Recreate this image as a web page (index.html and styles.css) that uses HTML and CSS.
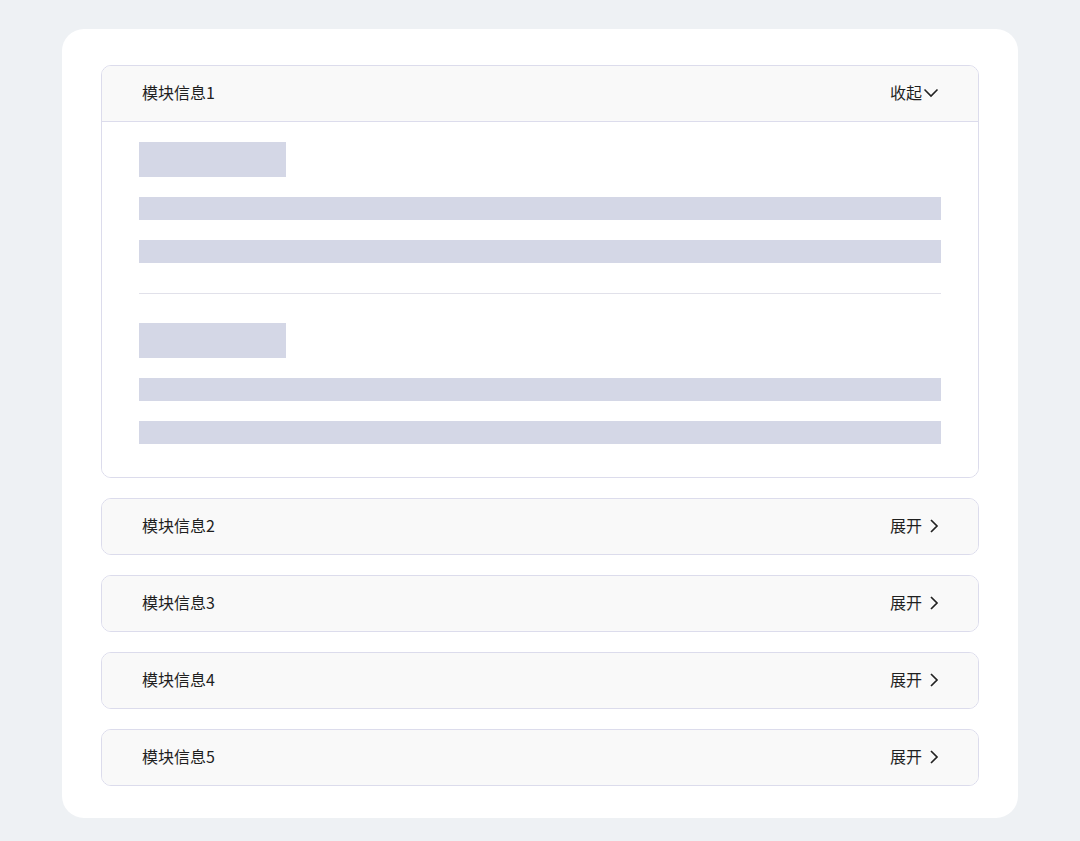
FILE: index.html
```html
<!DOCTYPE html>
<html lang="zh-CN">

<head>
    <meta charset="UTF-8">
    <meta name="viewport" content="width=device-width, initial-scale=1.0">
    <title>模块信息</title>
    <link rel="stylesheet" href="styles.css">
</head>

<body>
    <div class="card">
        <div class="panel open">
            <div class="panel-head">
                <span class="title">模块信息1</span>
                <span class="toggle">收起
                    <svg class="arrow down" width="16" height="10" viewBox="0 0 16 10">
                        <path d="M1.5 1.5l6.5 6.5 6.5-6.5" fill="none" stroke="#222" stroke-width="1.6" />
                    </svg>
                </span>
            </div>
            <div class="panel-body">
                <div class="group">
                    <div class="sk sk-title"></div>
                    <div class="sk sk-line"></div>
                    <div class="sk sk-line"></div>
                </div>
                <div class="divider"></div>
                <div class="group">
                    <div class="sk sk-title"></div>
                    <div class="sk sk-line"></div>
                    <div class="sk sk-line"></div>
                </div>
            </div>
        </div>

        <div class="panel">
            <div class="panel-head">
                <span class="title">模块信息2</span>
                <span class="toggle">展开
                    <svg class="arrow" width="10" height="16" viewBox="0 0 10 16">
                        <path d="M2 2l6 6-6 6" fill="none" stroke="#222" stroke-width="1.7" />
                    </svg>
                </span>
            </div>
        </div>

        <div class="panel">
            <div class="panel-head">
                <span class="title">模块信息3</span>
                <span class="toggle">展开
                    <svg class="arrow" width="10" height="16" viewBox="0 0 10 16">
                        <path d="M2 2l6 6-6 6" fill="none" stroke="#222" stroke-width="1.7" />
                    </svg>
                </span>
            </div>
        </div>

        <div class="panel">
            <div class="panel-head">
                <span class="title">模块信息4</span>
                <span class="toggle">展开
                    <svg class="arrow" width="10" height="16" viewBox="0 0 10 16">
                        <path d="M2 2l6 6-6 6" fill="none" stroke="#222" stroke-width="1.7" />
                    </svg>
                </span>
            </div>
        </div>

        <div class="panel">
            <div class="panel-head">
                <span class="title">模块信息5</span>
                <span class="toggle">展开
                    <svg class="arrow" width="10" height="16" viewBox="0 0 10 16">
                        <path d="M2 2l6 6-6 6" fill="none" stroke="#222" stroke-width="1.7" />
                    </svg>
                </span>
            </div>
        </div>
    </div>
</body>

</html>
```

FILE: styles.css
```css
* {
    box-sizing: border-box;
}

body {
    margin: 0;
    padding: 29px 62px 23px;
    background-color: #eef1f4;
    font-family: "Noto Sans CJK SC", "Noto Sans", sans-serif;
    color: #222;
}

.card {
    display: flex;
    flex-direction: column;
    gap: 20px;
    padding: 36px 39px 32px;
    background-color: #fff;
    border-radius: 22px;
}

.panel {
    border: 1px solid #dcdcec;
    border-radius: 10px;
    overflow: hidden;
}

.panel-head {
    display: flex;
    align-items: center;
    justify-content: space-between;
    height: 55px;
    padding: 0 39px 3px 40px;
    background-color: #f9f9f9;
}

.open .panel-head {
    height: 56px;
    border-bottom: 1px solid #dcdcec;
}

.title {
    font-size: 16px;
    color: #1f1f1f;
}

.toggle {
    display: flex;
    align-items: center;
    gap: 1px;
    font-size: 16px;
    color: #1f1f1f;
}

.panel:not(.open) .toggle {
    gap: 7px;
}

.arrow {
    display: block;
    margin-top: 2px;
}

.panel-body {
    padding: 20px 37px 33px;
    background-color: #fff;
}

.group {
    display: flex;
    flex-direction: column;
    gap: 20px;
}

.sk {
    background-color: #d4d7e6;
}

.sk-title {
    width: 147px;
    height: 35px;
}

.sk-line {
    height: 23px;
}

.divider {
    height: 1px;
    margin: 30px 0 29px;
    background-color: #e1e1ea;
}
```
